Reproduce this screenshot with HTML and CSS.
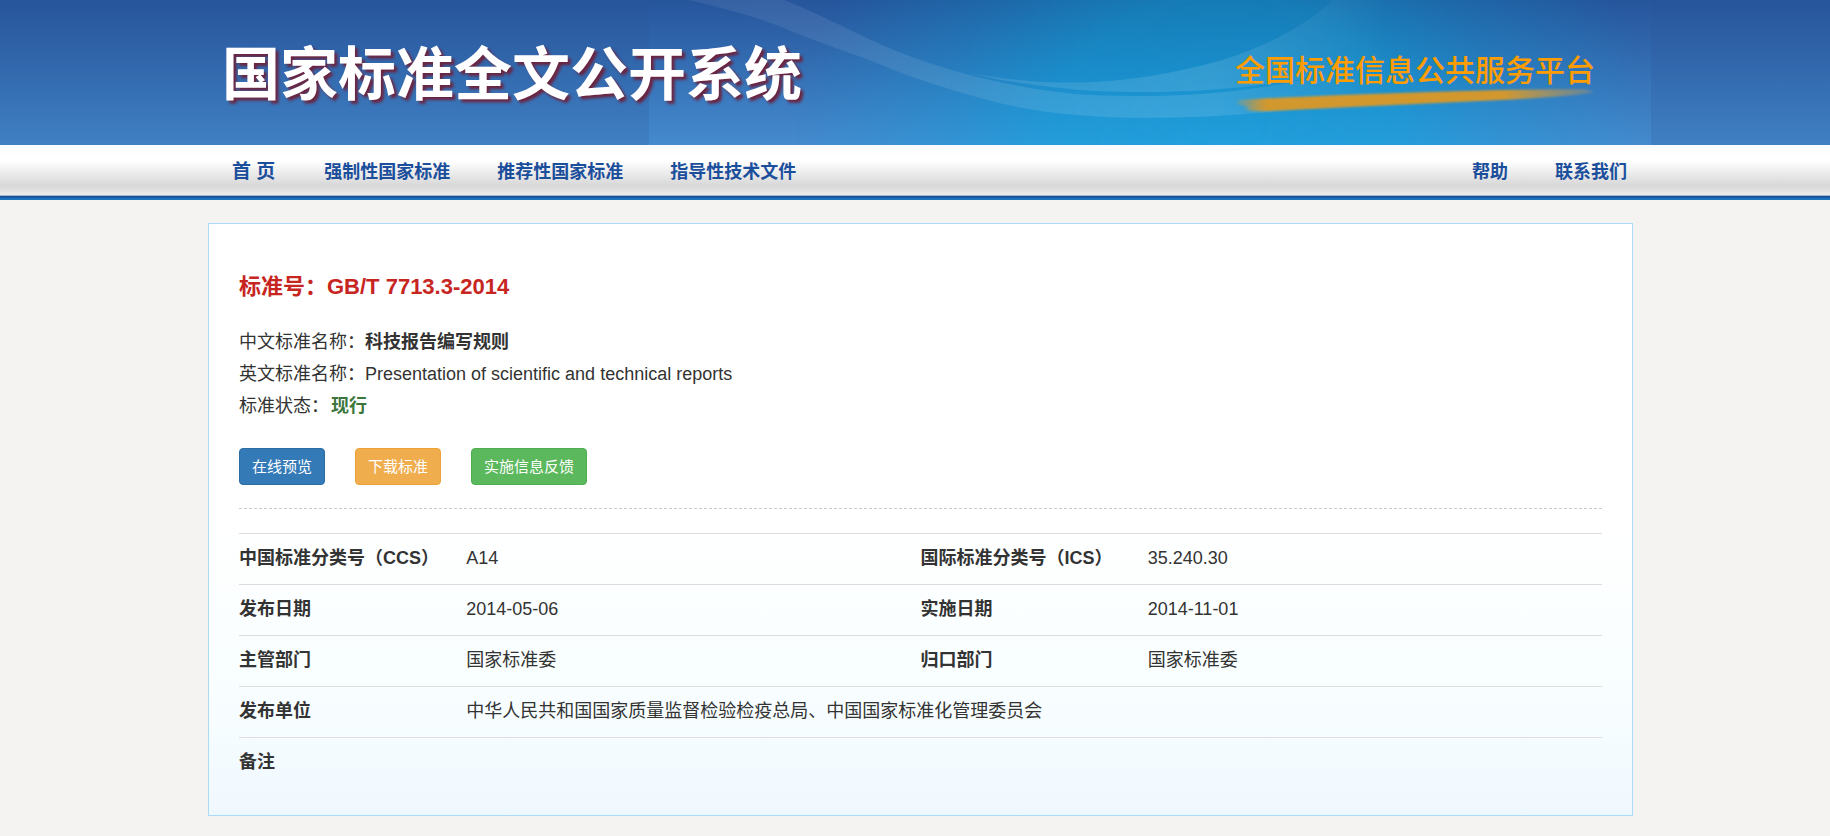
FILE: index.html
```
<!DOCTYPE html>
<html lang="zh-CN">

<head>
  <meta charset="utf-8">
  <meta name="viewport" content="width=device-width, initial-scale=1.0">
  <title>国家标准全文公开系统</title>
  <link rel="stylesheet" href="styles.css">
</head>

<body>
  <header class="banner">
    <svg class="banner-bg" viewBox="0 0 1002 145" aria-hidden="true">
      <defs>
        <linearGradient id="base" x1="0" y1="0" x2="0" y2="1">
          <stop offset="0" stop-color="#26559c" />
          <stop offset="1" stop-color="#458bce" />
        </linearGradient>
        <linearGradient id="glow" x1="0" y1="0" x2="0" y2="1">
          <stop offset="0" stop-color="#147fb8" />
          <stop offset="0.5" stop-color="#1790cc" />
          <stop offset="1" stop-color="#219fdc" />
        </linearGradient>
        <radialGradient id="fade" gradientUnits="userSpaceOnUse" cx="0" cy="0" r="1" gradientTransform="translate(575 130) scale(430 330)">
          <stop offset="0" stop-color="#fff" stop-opacity="1" />
          <stop offset="0.4" stop-color="#fff" stop-opacity="0.9" />
          <stop offset="0.65" stop-color="#fff" stop-opacity="0.45" />
          <stop offset="1" stop-color="#fff" stop-opacity="0" />
        </radialGradient>
        <mask id="mask">
          <rect width="1002" height="145" fill="url(#fade)" />
        </mask>
        <linearGradient id="wave" gradientUnits="userSpaceOnUse" x1="40" y1="0" x2="740" y2="0">
          <stop offset="0" stop-color="#fff" stop-opacity="0.07" />
          <stop offset="0.75" stop-color="#fff" stop-opacity="0.12" />
          <stop offset="1" stop-color="#fff" stop-opacity="0" />
        </linearGradient>
      </defs>
      <rect width="1002" height="145" fill="url(#base)" />
      <rect width="1002" height="145" fill="url(#glow)" mask="url(#mask)" />
      <path fill="url(#wave)" d="M40 0 C80 9 105 17 130 26 C165 41 190 49 215 58 C260 77 300 90 350 103 C440 124 560 123 740 98 L740 55 C640 92 540 99 440 95 C370 90 300 72 250 52 C210 36 180 18 135 0 Z" />
      <path fill="url(#wave)" d="M322 73 C420 92 500 80 570 61 C620 46 660 23 684 0 L740 0 L740 60 C630 90 520 96 430 90 C390 86 350 81 322 73 Z" />
    </svg>
    <div class="container banner-inner">
      <h1 class="logo">国家标准全文公开系统</h1>
      <a class="platform" href="#">
        <span>全国标准信息公共服务平台</span>
        <svg class="brush" viewBox="0 0 370 32" aria-hidden="true">
          <defs>
            <linearGradient id="stroke" x1="0" y1="0" x2="1" y2="0">
              <stop offset="0" stop-color="#d9962c" stop-opacity="0.2" />
              <stop offset="0.08" stop-color="#d2982f" />
              <stop offset="0.75" stop-color="#d2982f" />
              <stop offset="1" stop-color="#c99a50" stop-opacity="0.3" />
            </linearGradient>
            <filter id="soft" x="-5%" y="-40%" width="110%" height="180%">
              <feGaussianBlur stdDeviation="2 1" />
            </filter>
          </defs>
          <path fill="url(#stroke)" filter="url(#soft)" d="M6 16 Q40 14 110 11 Q190 8 270 6 L350 5 Q364 6 360 9 Q330 13 270 16 L120 23 L40 27 Q18 28 14 25 Q22 23 8 21 Z" />
        </svg>
      </a>
    </div>
  </header>

  <nav class="nav">
    <div class="container nav-inner">
      <a class="home" href="#">首 页</a>
      <a href="#">强制性国家标准</a>
      <a href="#">推荐性国家标准</a>
      <a href="#">指导性技术文件</a>
      <a class="right" href="#">帮助</a>
      <a href="#">联系我们</a>
    </div>
  </nav>

  <main class="container">
    <div class="detail">
      <h2>标准号：GB/T 7713.3-2014</h2>
      <p>中文标准名称：<b>科技报告编写规则</b></p>
      <p>英文标准名称：Presentation of scientific and technical reports</p>
      <p>标准状态：<b class="status">现行</b></p>

      <div class="buttons">
        <button type="button" class="btn btn-primary">在线预览</button>
        <button type="button" class="btn btn-warning">下载标准</button>
        <button type="button" class="btn btn-success">实施信息反馈</button>
      </div>

      <table class="info">
        <tr>
          <th>中国标准分类号（CCS）</th>
          <td>A14</td>
          <th>国际标准分类号（ICS）</th>
          <td>35.240.30</td>
        </tr>
        <tr>
          <th>发布日期</th>
          <td>2014-05-06</td>
          <th>实施日期</th>
          <td>2014-11-01</td>
        </tr>
        <tr>
          <th>主管部门</th>
          <td>国家标准委</td>
          <th>归口部门</th>
          <td>国家标准委</td>
        </tr>
        <tr>
          <th>发布单位</th>
          <td colspan="3">中华人民共和国国家质量监督检验检疫总局、中国国家标准化管理委员会</td>
        </tr>
        <tr>
          <th>备注</th>
          <td colspan="3"></td>
        </tr>
      </table>
    </div>
  </main>
</body>

</html>
```
FILE: styles.css
```
* {
  box-sizing: border-box;
}

body {
  margin: 0;
  background-color: #f4f3f1;
  color: #333;
  font-family: "Liberation Sans", "Noto Sans CJK SC", sans-serif;
  font-size: 18px;
  line-height: 32px;
}

a {
  text-decoration: none;
}

.container {
  max-width: 1440px;
  margin: 0 auto;
  padding: 0 2px 0 13px;
}

/* banner */
.banner {
  position: relative;
  overflow: hidden;
  background: linear-gradient(#27549b, #3f80c2);
}

.banner-bg {
  position: absolute;
  top: 0;
  left: calc(50% - 266px);
  width: 1002px;
  height: 145px;
}

.banner-inner {
  position: relative;
  display: flex;
  justify-content: space-between;
  align-items: center;
  height: 145px;
}

.logo {
  margin: 4px 0 0 14px;
  color: #fff;
  font-size: 58px;
  line-height: 64px;
  text-shadow: 3px 3px 3px #6b2440;
}

.platform {
  display: flex;
  flex-direction: column;
  width: 370px;
  margin: 29px 32px 0 0;
  color: #ff9c00;
  font-size: 30px;
  font-weight: 500;
  line-height: 26px;
}

.platform span {
  padding-left: 4px;
}

.brush {
  width: 100%;
  height: 32px;
}

/* nav */
.nav {
  background: linear-gradient(#f7fafe, #fff 20%, #fff 30%, #d9d9d9 75%, #dcdcdc 82%, #f5f5f5);
  border-bottom: 2px solid #1b74bd;
  box-shadow: inset 0 -2px #18559b, inset 0 -3px #9bb4cc;
}

.nav-inner {
  display: flex;
  align-items: center;
  gap: 47px;
  height: 53px;
  padding-left: 37px;
  padding-right: 8px;
}

.nav a {
  color: #1b4f9c;
  font-weight: bold;
}

.nav .home {
  margin-right: 2px;
  font-size: 19px;
}

.nav .right {
  margin-left: auto;
}

/* detail */
.detail {
  margin: 23px 0 20px;
  padding: 46px 30px 26px;
  border: 1px solid #aadcfa;
  background: linear-gradient(#fff 50%, #f8feff 80%, #f0f8ff);
}

.detail h2 {
  margin: 0 0 22px;
  color: #c7251f;
  font-size: 22px;
  line-height: 34px;
}

.detail p {
  margin: 0;
}

.status {
  margin-left: 2px;
  color: #3c763d;
}

.buttons {
  display: flex;
  gap: 30px;
  padding: 26px 0 23px;
  border-bottom: 1px dashed #ccc;
}

.btn {
  height: 37px;
  padding: 0 12px 2px;
  border: 1px solid;
  border-radius: 4px;
  color: #fff;
  font-family: inherit;
  font-size: 15px;
  cursor: pointer;
}

.btn-primary {
  background-color: #337ab7;
  border-color: #2e6da4;
}

.btn-warning {
  background-color: #f0ad4e;
  border-color: #eea236;
}

.btn-success {
  background-color: #5cb85c;
  border-color: #4cae4c;
}

.info {
  width: 100%;
  margin-top: 24px;
  border-collapse: collapse;
  table-layout: fixed;
}

.info th,
.info td {
  height: 51px;
  padding: 0 0 2px;
  border-top: 1px solid #ddd;
  text-align: left;
}

.info th {
  width: 16.6667%;
}
```
